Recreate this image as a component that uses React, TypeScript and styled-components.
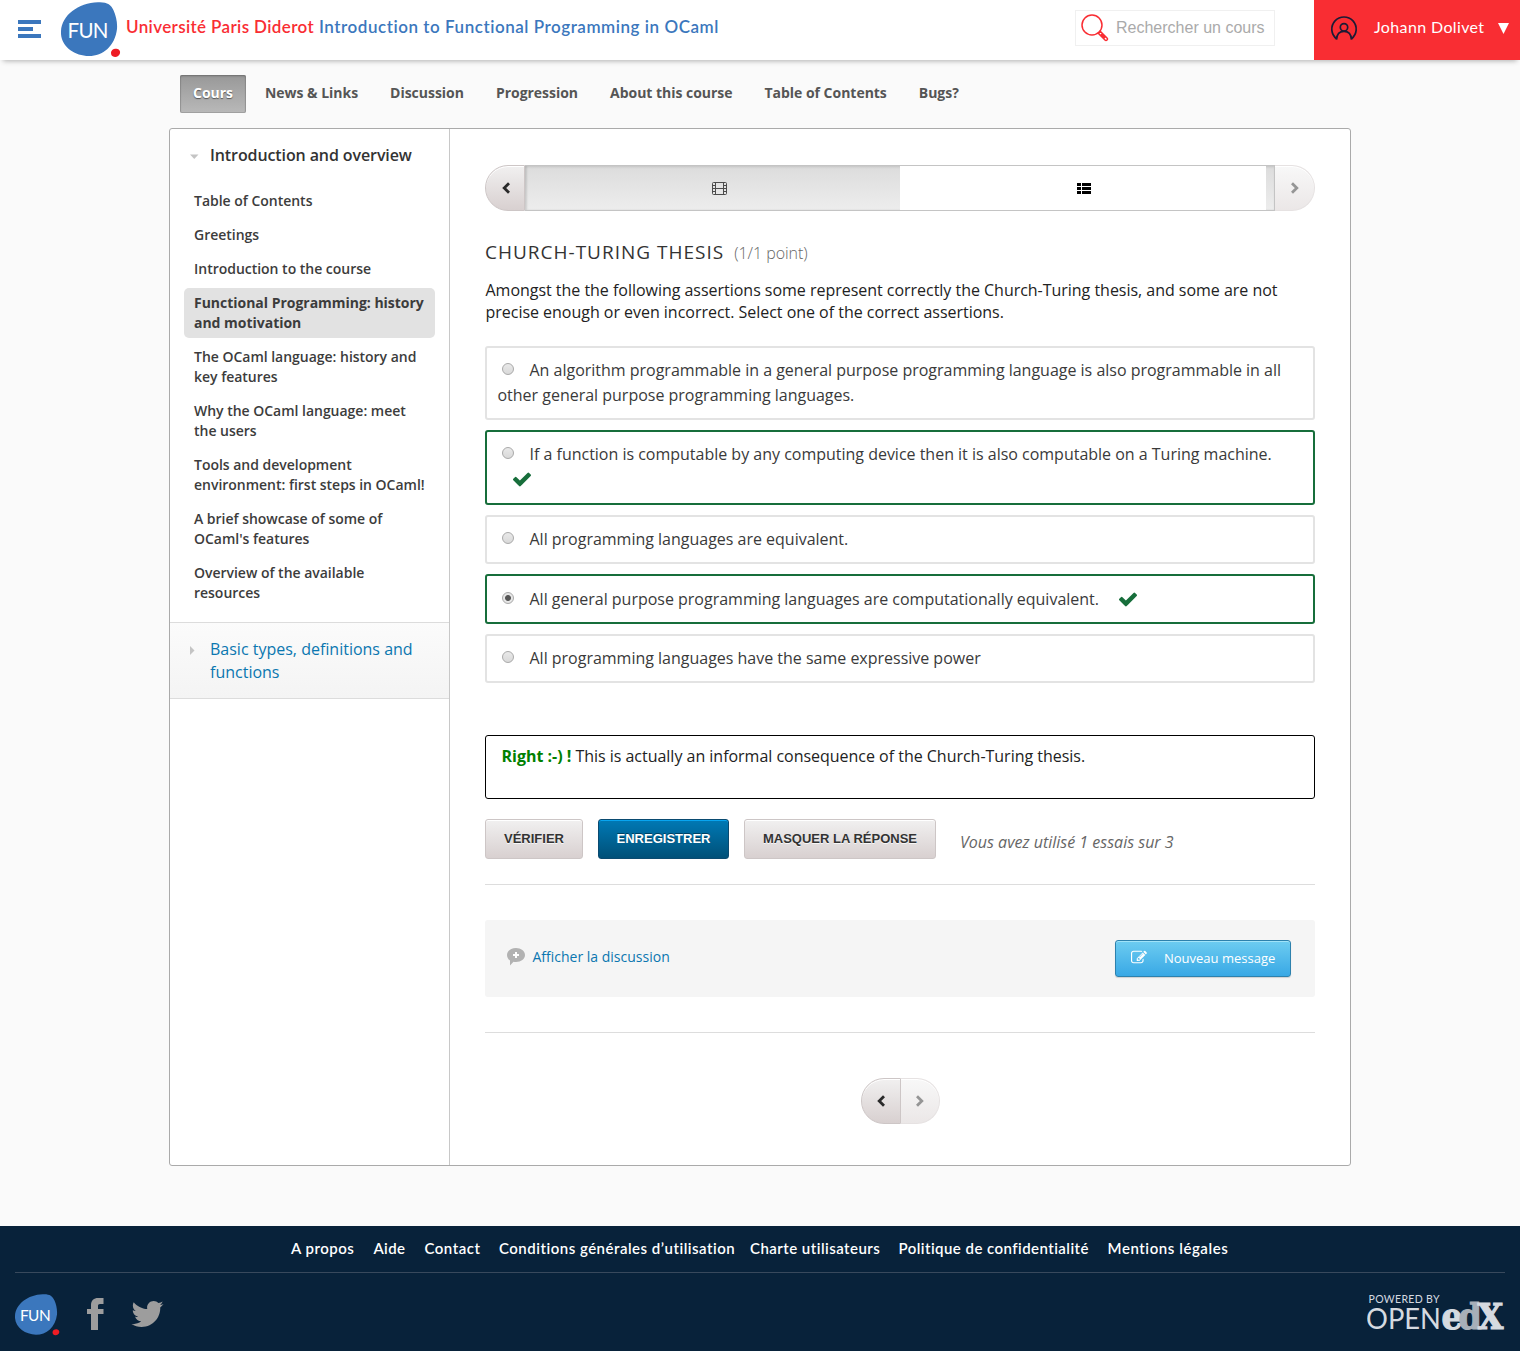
import React from "react";
import styled, { createGlobalStyle, css } from "styled-components";

const sans = `"Open Sans", "Noto Sans", sans-serif`;
const brand = `Lato, "Open Sans", sans-serif`;
const arial = `"Liberation Sans", Arial, sans-serif`;

const GlobalStyle = createGlobalStyle`
  * { box-sizing: border-box; }
  body { margin: 0; background: #fafafa; font-family: ${sans}; font-size: 16px; color: #222; }
  h1, h2, p, ul, ol { margin: 0; padding: 0; font-weight: inherit; font-size: inherit; }
  ul, ol { list-style: none; }
  a { text-decoration: none; color: inherit; }
  svg { display: block; flex: none; }
  button { margin: 0; cursor: pointer; }
`;

const Page = styled.div`
  display: flex;
  flex-direction: column;
  height: 1351px;
  overflow: hidden;
`;

/* ---------- header ---------- */
const Header = styled.header`
  flex: none;
  display: flex;
  height: 60px;
  background: #fff;
  box-shadow: 0 4px 5px -3px rgba(0, 0, 0, 0.3);
  font-family: ${brand};
`;
const MenuButton = styled.a`
  padding: 20px 0 0 18px;
  width: 61px;
`;
const CourseTitle = styled.h1`
  display: flex;
  margin-left: 5px;
  padding-top: 16px;
  flex: 1;
  font-size: 17px;
  line-height: 22px;
  white-space: nowrap;
  font-weight: 600;
`;
const TitlePart = styled.span<{ $color: string; $width: number; $track: number }>`
  width: ${(p) => p.$width}px;
  color: ${(p) => p.$color};
  letter-spacing: ${(p) => p.$track}px;
`;
const SearchBox = styled.div`
  display: flex;
  align-items: center;
  width: 200px;
  height: 36px;
  margin: 10px 39px 0 0;
  padding: 0 0 0 5px;
  gap: 7px;
  border: 1px solid #f0f0f0;
  font: 16px/34px ${arial};
  color: #aaa;
  white-space: nowrap;
`;
const UserMenu = styled.a`
  display: flex;
  align-items: center;
  width: 206px;
  padding: 0 0 4px 16px;
  background: #f92d33;
  color: #fff;
  font-size: 16px;
  white-space: nowrap;
`;
const UserName = styled.span`
  width: 124px;
  margin-left: 16px;
  padding-bottom: 3px;
  letter-spacing: 0.37px;
`;

/* ---------- course tabs ---------- */
const Tabs = styled.nav`
  flex: none;
  display: flex;
  gap: 6px;
  padding: 15px 0 0 180px;
  height: 68px;
`;
const Tab = styled.a<{ $active?: boolean }>`
  height: 38px;
  padding: 0 13px;
  line-height: 36px;
  font-size: 14px;
  font-weight: 700;
  letter-spacing: -0.025px;
  color: #555;
  border-radius: 2px;
  ${(p) =>
    p.$active &&
    css`
      color: #fff;
      background: linear-gradient(#989898, #b9b9b9);
      box-shadow: inset 0 0 0 1px rgba(120, 120, 120, 0.35), inset 0 1px 2px rgba(0, 0, 0, 0.3);
      text-shadow: 0 1px 1px rgba(0, 0, 0, 0.5);
    `}
`;

/* ---------- panel ---------- */
const Panel = styled.div`
  flex: none;
  display: flex;
  width: 1182px;
  height: 1038px;
  margin: 0 auto;
  border: 1px solid #aaa;
  border-radius: 3px;
  background: #fff;
`;
const Sidebar = styled.aside`
  width: 280px;
  border-right: 1px solid #c8c8c8;
`;
const Chapter = styled.h2<{ $link?: boolean }>`
  display: flex;
  padding: 15px 20px 0;
  gap: 11px;
  line-height: 23px;
  font-weight: 600;
  letter-spacing: -0.1px;
  color: #333;
  svg { margin-top: 7.5px; }
  ${(p) =>
    p.$link &&
    css`
      height: 77px;
      border: solid #dcdcdc;
      border-width: 1px 0;
      background: linear-gradient(#fbfbfb, #f4f4f4);
      color: #0b77b0;
      font-weight: 400;
      letter-spacing: 0;
    `}
`;
const Lessons = styled.ul`
  display: flex;
  flex-direction: column;
  gap: 4px;
  padding: 19px 14px 14px;
`;
const Lesson = styled.li<{ $current?: boolean }>`
  padding: 5px 0 5px 10px;
  border-radius: 5px;
  font-size: 14px;
  line-height: 20px;
  letter-spacing: -0.02px;
  font-weight: ${(p) => (p.$current ? 700 : 600)};
  color: #3c3c3c;
  background: ${(p) => (p.$current ? "#e2e2e2" : "none")};
  white-space: pre-line;
`;

const Content = styled.main`
  width: 900px;
  padding: 36px 35px 0;
`;
const Sequence = styled.nav`
  display: flex;
  height: 46px;
`;
const Arrow = styled.a<{ $side: "left" | "right"; $w?: number }>`
  display: flex;
  align-items: center;
  justify-content: center;
  width: ${(p) => p.$w ?? 40}px;
  height: 46px;
  padding-left: 1px;
  border: 1px solid #cdc6c6;
  background: linear-gradient(#f1f0f0, #d8d0d0);
  box-shadow: inset 0 1px 0 #fff;
  color: #2a2a2a;
  border-radius: ${(p) => (p.$side === "left" ? "23px 0 0 23px" : "0 23px 23px 0")};
  ${(p) =>
    p.$side === "right" &&
    css`
      border-color: #e6e2e2;
      border-left: 0;
      color: #959595;
      background: linear-gradient(#f8f8f8, #ebe7e7);
    `}
`;
const Track = styled.div`
  display: flex;
  flex: 1;
  border: solid #c4c4c4;
  border-width: 1px 1px 1px 0;
  background: linear-gradient(#dcdcdc, #ededed);
  box-shadow: inset 2px 0 2px rgba(0, 0, 0, 0.12), inset 0 2px 2px rgba(0, 0, 0, 0.05);
`;
const Step = styled.a<{ $w: number; $active?: boolean }>`
  display: flex;
  align-items: center;
  justify-content: center;
  width: ${(p) => p.$w}px;
  padding-left: ${(p) => (p.$active ? 1 : 14)}px;
  background: ${(p) => (p.$active ? "#fff" : "none")};
`;

const ProblemTitle = styled.h2`
  display: flex;
  align-items: baseline;
  gap: 10px;
  height: 27px;
  margin-top: 28px;
  font-size: 19px;
  line-height: 27px;
  letter-spacing: 1px;
  color: #333;
`;
const Points = styled.span`
  font-size: 16px;
  font-weight: 300;
  letter-spacing: -0.05px;
  color: #666;
`;
const Question = styled.p`
  margin-top: 13px;
  padding-left: 0.5px;
  line-height: 22px;
  letter-spacing: -0.025px;
  color: #222;
`;
const Choices = styled.div`
  display: flex;
  flex-direction: column;
  gap: 10px;
  margin-top: 23px;
`;
const Choice = styled.label<{ $h: number; $right?: boolean }>`
  height: ${(p) => p.$h}px;
  padding: ${(p) => (p.$h === 50 ? 11 : 10)}px 10.5px 0;
  border: 2px solid ${(p) => (p.$right ? "#176e3b" : "#e3e3e3")};
  border-radius: 3px;
  line-height: 25px;
  letter-spacing: -0.01px;
  color: #3a3a3a;
`;
const Radio = styled.span<{ $on?: boolean }>`
  display: inline-block;
  width: 12px;
  height: 12px;
  margin: 0 15.5px 0 4.5px;
  vertical-align: 1px;
  border: 1px solid #a9a9a9;
  border-radius: 50%;
  background: ${(p) =>
    p.$on
      ? "radial-gradient(circle at 50% 50%, #555 0 2.5px, #e6e6e6 3.4px)"
      : "linear-gradient(#e9e9e9, #d9d9d9)"};
`;
const CheckMark = styled.svg`
  display: inline-block;
  margin-left: 15.5px;
  vertical-align: -2px;
  fill: #176e3b;
`;
const Feedback = styled.div`
  height: 64px;
  margin-top: 52px;
  padding: 9px 15.5px;
  border: 1px solid #000;
  border-radius: 3px;
  line-height: 22px;
  letter-spacing: -0.02px;
  b { color: #008000; }
`;
const Actions = styled.div`
  display: flex;
  gap: 15px;
  margin-top: 20px;
  border-bottom: 1px solid #ddd;
  height: 66px;
`;
const ActionButton = styled.button<{ $w: number; $primary?: boolean }>`
  width: ${(p) => p.$w}px;
  height: 40px;
  padding: 0 0 1px;
  border: 1px solid ${(p) => (p.$primary ? "#0a4a70" : "#cdc6c6")};
  border-radius: 3px;
  font: 700 13px ${arial};
  white-space: nowrap;
  color: ${(p) => (p.$primary ? "#fff" : "#333")};
  background: ${(p) =>
    p.$primary ? "linear-gradient(#0079b5, #005078)" : "linear-gradient(#f1f0f0, #d8d0d0)"};
  box-shadow: inset 0 1px 0 ${(p) => (p.$primary ? "#08a5f0" : "#fff")};
  text-shadow: ${(p) => (p.$primary ? "0 -1px 0 #004061" : "0 1px 0 #f8f8f8")};
`;
const Attempts = styled.em`
  margin-left: 9px;
  line-height: 46px;
  color: #666;
`;
const Discussion = styled.section`
  display: flex;
  align-items: center;
  justify-content: space-between;
  height: 77px;
  margin-top: 35px;
  padding: 0 24px 0 22px;
  background: #f5f5f5;
  border-radius: 3px;
`;
const ShowDiscussion = styled.a`
  display: flex;
  align-items: center;
  gap: 7.5px;
  padding-bottom: 4px;
  font-size: 14px;
  color: #0b77b0;
`;
const NewPost = styled.a`
  display: flex;
  align-items: center;
  gap: 17px;
  width: 176px;
  height: 37px;
  padding: 0 0 1.5px 15px;
  border: 1px solid #2d81ad;
  border-radius: 3px;
  background: linear-gradient(#6dccf1, #38a8e5);
  box-shadow: inset 0 1px 0 #a0e3f9, 0 1px 1px rgba(0, 0, 0, 0.15);
  color: #fff;
  font-size: 13px;
  white-space: nowrap;
  svg { margin-bottom: 2px; }
`;
const BottomNav = styled.nav`
  display: flex;
  justify-content: center;
  margin-top: 35px;
  padding-top: 45px;
  border-top: 1px solid #ddd;
`;

/* ---------- footer ---------- */
const Footer = styled.footer`
  height: 125px;
  margin-top: 60px;
  padding: 0 15px;
  background: #08223a;
  color: #fff;
  font-family: ${brand};
`;
const FooterLinks = styled.div`
  display: flex;
  height: 47px;
  padding-left: 276px;
  border-bottom: 1px solid #38495c;
  font-size: 15px;
  font-weight: 600;
  line-height: 45px;
  white-space: nowrap;
`;
const FooterLink = styled.a<{ $w: number; $track: number }>`
  width: ${(p) => p.$w}px;
  letter-spacing: ${(p) => p.$track}px;
`;
const FooterBottom = styled.div`
  display: flex;
  padding-top: 19px;
`;
const Social = styled.div`
  display: flex;
  flex: 1;
  gap: 27px;
  padding: 6px 0 0 27px;
  fill: #9d9d9d;
`;

const FunLogo = ({ w, h }: { w: number; h: number }) => (
  <svg width={w} height={h} viewBox="1 0 60 57">
    <path
      d="M1 31C2 15 18 3 38 2.200c9-.5 13 2.300 15.500 8C56 16 57.500 22 57 29 55 46 43 56 29 56 14 56 0 46 1 31Z"
      fill="#3b77bd"
    />
    <path d="M51 53c0-3 3-4.500 5.500-4.200 3 .4 4 2.500 3.500 4.500-.6 2.500-3 3.700-5 3.600-3 0-4-2-4-3.900Z" fill="#ee1c24" />
    <text x="7.500" y="38" fill="#fff" fontFamily="Lato, sans-serif" fontSize="20.500" textLength="41">
      FUN
    </text>
  </svg>
);
const Chevron = ({ flip }: { flip?: boolean }) => (
  <svg width="10" height="14" viewBox="0 0 10 14">
    <path
      d={flip ? "M2 2.200 6.800 7 2 11.800" : "M8 2.200 3.200 7 8 11.800"}
      fill="none"
      stroke="currentColor"
      strokeWidth="2.800"
    />
  </svg>
);
const Check = () => (
  <CheckMark width="18" height="15" viewBox="121 334 1550 1188">
    <path d="M1671 566q0 40-28 68l-724 724-136 136q-28 28-68 28t-68-28l-136-136-362-362q-28-28-28-68t28-68l136-136q28-28 68-28t68 28l294 295 656-657q28-28 68-28t68 28l136 136q28 28 28 68z" />
  </CheckMark>
);

const tabs = ["Cours", "News & Links", "Discussion", "Progression", "About this course", "Table of Contents", "Bugs?"];
const lessons = [
  "Table of Contents",
  "Greetings",
  "Introduction to the course",
  "Functional Programming: history\nand motivation",
  "The OCaml language: history and\nkey features",
  "Why the OCaml language: meet\nthe users",
  "Tools and development\nenvironment: first steps in OCaml!",
  "A brief showcase of some of\nOCaml's features",
  "Overview of the available\nresources",
];
const choices = [
  { h: 74, text: "An algorithm programmable in a general purpose programming language is also programmable in all other general purpose programming languages." },
  { h: 75, right: true, text: "If a function is computable by any computing device then it is also computable on a Turing machine." },
  { h: 49, text: "All programming languages are equivalent." },
  { h: 50, right: true, on: true, text: "All general purpose programming languages are computationally equivalent." },
  { h: 49, text: "All programming languages have the same expressive power" },
];
const footerLinks = [
  { w: 82.5, t: 0.5, text: "A propos" },
  { w: 51, t: 0.35, text: "Aide" },
  { w: 74.5, t: 0.5, text: "Contact" },
  { w: 251, t: 0.5, text: "Conditions générales d’utilisation" },
  { w: 148.5, t: 0.47, text: "Charte utilisateurs" },
  { w: 209, t: 0.45, text: "Politique de confidentialité" },
  { w: 130, t: 0.57, text: "Mentions légales" },
];

export default function App() {
  return (
    <Page>
      <GlobalStyle />
      <Header>
        <MenuButton>
          <svg width="23" height="18" fill="#3b77bd">
            <path d="M0 0h23v4H0zM0 7h15v4H0zM0 14h23v4H0z" />
          </svg>
        </MenuButton>
        <FunLogo w={60} h={57} />
        <CourseTitle>
          <TitlePart $color="#f92d33" $width={193} $track={0.37}>Université Paris Diderot</TitlePart>
          <TitlePart $color="#3b77bd" $width={402} $track={0.54}>
            Introduction to Functional Programming in OCaml
          </TitlePart>
        </CourseTitle>
        <SearchBox>
          <svg width="28" height="28" viewBox="0 0 28 28" fill="none" stroke="#f92d33" strokeWidth="1.500">
            <circle cx="11" cy="11" r="10" />
            <path d="M17.500 19.500l2-2 6.500 6.500a1.400 1.400 0 0 1-2 2zM20 20l4 4" />
          </svg>
          Rechercher un cours
        </SearchBox>
        <UserMenu>
          <svg width="28" height="26" viewBox="0 0 28 26" fill="none" stroke="#1c1b35" strokeWidth="1.700">
            <path d="M6.500 23.800a12.200 12.200 0 1 1 15 0" />
            <path d="M6.500 24.600c.3-5.500 3-8.300 7.500-8.300s7.200 2.800 7.500 8.300" />
            <circle cx="14" cy="12.300" r="3.700" />
          </svg>
          <UserName>Johann Dolivet</UserName>
          <svg width="11" height="11"><path d="M0 0h11L5.500 11z" fill="#fff" /></svg>
        </UserMenu>
      </Header>

      <Tabs>
        {tabs.map((t, i) => (
          <Tab key={t} $active={i === 0}>{t}</Tab>
        ))}
      </Tabs>

      <Panel>
        <Sidebar>
          <Chapter>
            <svg width="9" height="9"><path d="M0 2.500h8.500L4.250 7z" fill="#c4c4c4" /></svg>
            Introduction and overview
          </Chapter>
          <Lessons>
            {lessons.map((l, i) => (
              <Lesson key={l} $current={i === 3}>{l}</Lesson>
            ))}
          </Lessons>
          <Chapter $link>
            <svg width="9" height="9"><path d="M0 0v9l4.500-4.500z" fill="#c4c4c4" /></svg>
            Basic types, definitions and functions
          </Chapter>
        </Sidebar>

        <Content>
          <Sequence>
            <Arrow $side="left"><Chevron /></Arrow>
            <Track>
              <Step $w={375}>
                <svg width="15" height="13" viewBox="0 0 15 13" fill="none" stroke="#4c4c4c">
                  <rect x=".5" y=".5" width="14" height="12" rx="1" />
                  <path d="M3.500 0v13M11.500 0v13M3.500 6.500h8M0 3.500h3.500M0 6.500h3.500M0 9.500h3.500M11.500 3.500H15M11.500 6.500H15M11.500 9.500H15" />
                </svg>
              </Step>
              <Step $w={366} $active>
                <svg width="14" height="11" fill="#000">
                  <path d="M0 0h4v3H0zM5 0h9v3H5zM0 4h4v3H0zM5 4h9v3H5zM0 8h4v3H0zM5 8h9v3H5z" />
                </svg>
              </Step>
            </Track>
            <Arrow $side="right"><Chevron flip /></Arrow>
          </Sequence>

          <ProblemTitle>
            CHURCH-TURING THESIS <Points>(1/1 point)</Points>
          </ProblemTitle>
          <Question>
            Amongst the the following assertions some represent correctly the Church-Turing thesis, and some are not
            precise enough or even incorrect. Select one of the correct assertions.
          </Question>

          <Choices>
            {choices.map((c) => (
              <Choice key={c.text} $h={c.h} $right={c.right}>
                <Radio $on={c.on} />
                {c.text}
                {c.right && <> <Check /></>}
              </Choice>
            ))}
          </Choices>

          <Feedback>
            <b>Right :-) !</b> This is actually an informal consequence of the Church-Turing thesis.
          </Feedback>

          <Actions>
            <ActionButton $w={98}>VÉRIFIER</ActionButton>
            <ActionButton $w={131} $primary>ENREGISTRER</ActionButton>
            <ActionButton $w={192}>MASQUER LA RÉPONSE</ActionButton>
            <Attempts>Vous avez utilisé 1 essais sur 3</Attempts>
          </Actions>

          <Discussion>
            <ShowDiscussion>
              <svg width="18" height="18" viewBox="0 0 18 18">
                <path d="M9 0c5 0 9 3 9 7s-4 7-9 7c-1 0-1.800 0-2.500-.3L3 17.500v-5C1 11.200 0 9.200 0 7c0-4 4-7 9-7Z" fill="#b2b2b2" />
                <path d="M9 4v6M6 7h6" stroke="#fff" strokeWidth="2" />
              </svg>
              Afficher la discussion
            </ShowDiscussion>
            <NewPost>
              <svg width="16" height="14" viewBox="0 128 1792 1408" fill="#fff">
                <path d="M888 1184l116-116-152-152-116 116v56h96v96h56zm440-720q-16-16-33 1l-350 350q-17 17-1 33t33-1l350-350q17-17 1-33zm80 594v190q0 119-84.500 203.500t-203.500 84.500h-832q-119 0-203.500-84.500t-84.500-203.500v-832q0-119 84.500-203.500t203.500-84.500h832q63 0 117 25 15 7 18 23 3 17-9 29l-49 49q-14 14-32 8-23-6-45-6h-832q-66 0-113 47t-47 113v832q0 66 47 113t113 47h832q66 0 113-47t47-113v-126q0-13 9-22l64-64q15-15 35-7t20 29zm-96-738l288 288-672 672h-288v-288zm444 132l-92 92-288-288 92-92q28-28 68-28t68 28l152 152q28 28 28 68t-28 68z" />
              </svg>
              Nouveau message
            </NewPost>
          </Discussion>

          <BottomNav>
            <Arrow $side="left"><Chevron /></Arrow>
            <Arrow $side="right" $w={39}><Chevron flip /></Arrow>
          </BottomNav>
        </Content>
      </Panel>

      <Footer>
        <FooterLinks>
          {footerLinks.map((l) => (
            <FooterLink key={l.text} $w={l.w} $track={l.t}>{l.text}</FooterLink>
          ))}
        </FooterLinks>
        <FooterBottom>
          <FunLogo w={45} h={44} />
          <Social>
            <svg width="17" height="32" viewBox="0 0 17 32">
              <path d="M16.500 0v6H13c-1.500 0-2 .8-2 2v3h5.500v5H11v16H4V16H0v-5h4V7c0-4.500 3-7 7-7z" />
            </svg>
            <svg width="33" height="32" viewBox="0 0 512 512">
              <path d="M459.370 151.716c.325 4.548.325 9.097.325 13.645 0 138.720-105.583 298.558-298.558 298.558-59.452 0-114.680-17.219-161.137-47.106 8.447.974 16.568 1.299 25.340 1.299 49.055 0 94.213-16.568 130.274-44.832-46.132-.975-84.792-31.188-98.112-72.772 6.498.974 12.995 1.624 19.818 1.624 9.421 0 18.843-1.300 27.614-3.573-48.081-9.747-84.143-51.980-84.143-102.985v-1.299c13.969 7.797 30.214 12.670 47.431 13.319-28.264-18.843-46.781-51.005-46.781-87.391 0-19.492 5.197-37.360 14.294-52.954 51.655 63.675 129.300 105.258 216.365 109.807-1.624-7.797-2.599-15.918-2.599-24.040 0-57.828 46.782-104.934 104.934-104.934 30.213 0 57.502 12.670 76.670 33.137 23.715-4.548 46.456-13.320 66.599-25.340-7.798 24.366-24.366 44.833-46.132 57.827 21.117-2.273 41.584-8.122 60.426-16.243-14.292 20.791-32.161 39.308-52.628 54.253z" />
            </svg>
          </Social>
          <svg width="138" height="50" viewBox="0 0 138 50" fill="#d5dae0">
            <text x="1.500" y="11" fontFamily="Lato, sans-serif" fontSize="10.500" textLength="71">POWERED BY</text>
            <text x="-1" y="37" fontFamily="Lato, sans-serif" fontWeight="400" fontSize="28" textLength="75" lengthAdjust="spacingAndGlyphs">OPEN</text>
            <text
              x="74.500"
              y="36.500"
              fontFamily="DejaVu Serif, serif"
              fontWeight="700"
              fontSize="35"
              letterSpacing="-4.500"
              textLength="57.500"
              lengthAdjust="spacingAndGlyphs"
              stroke="#d5dae0"
              strokeWidth="1.200"
            >
              e<tspan fill="#a7afb8" stroke="#a7afb8">d</tspan>X
            </text>
          </svg>
        </FooterBottom>
      </Footer>
    </Page>
  );
}
